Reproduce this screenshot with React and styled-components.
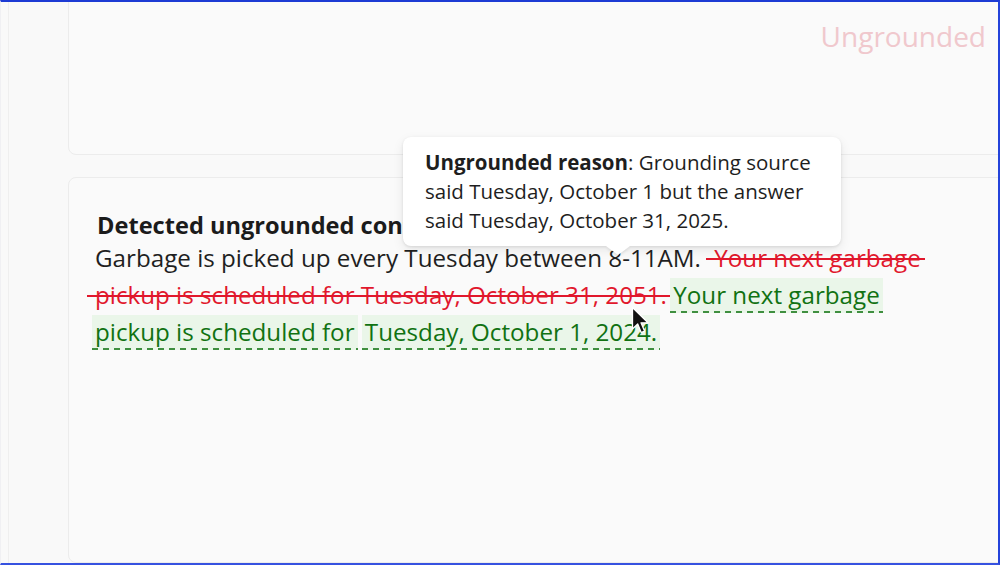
import React from "react";
import styled, { createGlobalStyle } from "styled-components";

const Global = createGlobalStyle`
  html, body {
    margin: 0;
    padding: 0;
    background: #f9f9f9;
  }
  body {
    font-family: "Open Sans", "Noto Sans", "Liberation Sans", sans-serif;
    color: #1f1f1f;
  }
`;

const Frame = styled.div`
  position: relative;
  box-sizing: border-box;
  width: 1000px;
  height: 565px;
  display: flex;
  overflow: hidden;
  background: #f9f9f9;
  border-top: 2px solid #1d3bd4;
  border-right: 2px solid #2443da;
  border-bottom: 2px solid #3652e0;
  border-left: 1px solid #f0f0f3;
`;

const Rail = styled.div`
  flex: none;
  width: 7px;
  border-right: 1px solid #efefef;
`;

const Stage = styled.div`
  flex: 1;
  display: flex;
  flex-direction: column;
  gap: 22px;
  margin-top: -20px;
  margin-right: -14px;
  padding-left: 59px;
`;

const Card = styled.section`
  box-sizing: border-box;
  border: 1px solid #ececec;
  border-radius: 8px;
  background: #fafafa;
  ${(p) =>
    p.$grow
      ? "flex: 1; padding: 32px 60px 0 28px;"
      : "flex: none; height: 173px; display: flex; justify-content: flex-end; align-items: flex-start; padding: 36px 25px 0 0;"}
`;

const Verdict = styled.span`
  font-size: 28px;
  line-height: 34px;
  color: #f0c8cd;
  font-weight: 400;
`;

const Heading = styled.h3`
  margin: 0;
  font-size: 23.6px;
  line-height: 30px;
  font-weight: 700;
  color: #1b1b1b;
`;

const Passage = styled.p`
  margin: -1px 0 0 -2px;
  font-size: 24.2px;
  line-height: 37px;
  color: #1f1f1f;
  width: 852px;
`;

/* grounded sentence kept as-is; the trailing margin leaves room before the struck claim */
const Kept = styled.span`
  margin-right: 7px;
`;

const Struck = styled.del`
  text-decoration: none;
  color: #e1172c;
  padding: 0 4px 0 8px;
  margin: 0 -4px 0 -8px;
  -webkit-box-decoration-break: clone;
  box-decoration-break: clone;
  background: linear-gradient(#e1172c, #e1172c) left 56% / 100% 2px no-repeat;
`;

const Fix = styled.ins`
  text-decoration: none;
  color: #117212;
  padding: 0 3px 2px;
  margin: 0 0 0 ${(p) => (p.$joined ? "-2px" : "-3px")};
  -webkit-box-decoration-break: clone;
  box-decoration-break: clone;
  background:
    repeating-linear-gradient(90deg, #3f8f3f 0 6px, transparent 6px 11px) left bottom / 100% 2px no-repeat,
    #eaf6e9;
`;

const Tip = styled.div`
  position: absolute;
  left: 402px;
  top: 135px;
  width: 438px;
  box-sizing: border-box;
  padding: 11px 20px 11px 22px;
  background: #ffffff;
  border-radius: 8px;
  box-shadow: 0 1px 3px rgba(0, 0, 0, 0.1), 0 4px 12px rgba(0, 0, 0, 0.08);
  font-size: 20.5px;
  line-height: 29px;
  color: #1e1e1e;
  z-index: 2;
`;

const TipArrow = styled.span`
  position: absolute;
  left: 203px;
  bottom: -9px;
  width: 0;
  height: 0;
  border-left: 12px solid transparent;
  border-right: 12px solid transparent;
  border-top: 9px solid #ffffff;
  filter: drop-shadow(0 2px 1px rgba(0, 0, 0, 0.08));
`;

const Pointer = styled.svg`
  position: absolute;
  left: 630px;
  top: 304px;
  z-index: 3;
`;

export default function App() {
  return (
    <>
      <Global />
      <Frame>
        <Rail />
        <Stage>
          <Card>
            <Verdict>Ungrounded</Verdict>
          </Card>
          <Card $grow>
            <Heading>Detected ungrounded content</Heading>
            <Passage>
              <Kept>Garbage is picked up every Tuesday between 8-11AM.</Kept>{" "}
              <Struck>
                Your next garbage pickup is scheduled for Tuesday, October 31, 2051.
              </Struck>{" "}
              <Fix>Your next garbage pickup is scheduled for</Fix>{" "}
              <Fix $joined>Tuesday, October 1, 2024.</Fix>
            </Passage>
          </Card>
        </Stage>
        <Tip>
          <strong>Ungrounded reason</strong>: Grounding source said Tuesday,
          October 1 but the answer said Tuesday, October 31, 2025.
          <TipArrow />
        </Tip>
        <Pointer width="20" height="29" viewBox="0 0 20 29">
          <path
            d="M1.5 1.5 L1.5 23 L6.7 18 L10.2 26.5 L13.5 25.1 L10 16.8 L17 16.8 Z"
            fill="#111"
            stroke="#fff"
            strokeWidth="1.3"
            strokeLinejoin="round"
          />
        </Pointer>
      </Frame>
    </>
  );
}
